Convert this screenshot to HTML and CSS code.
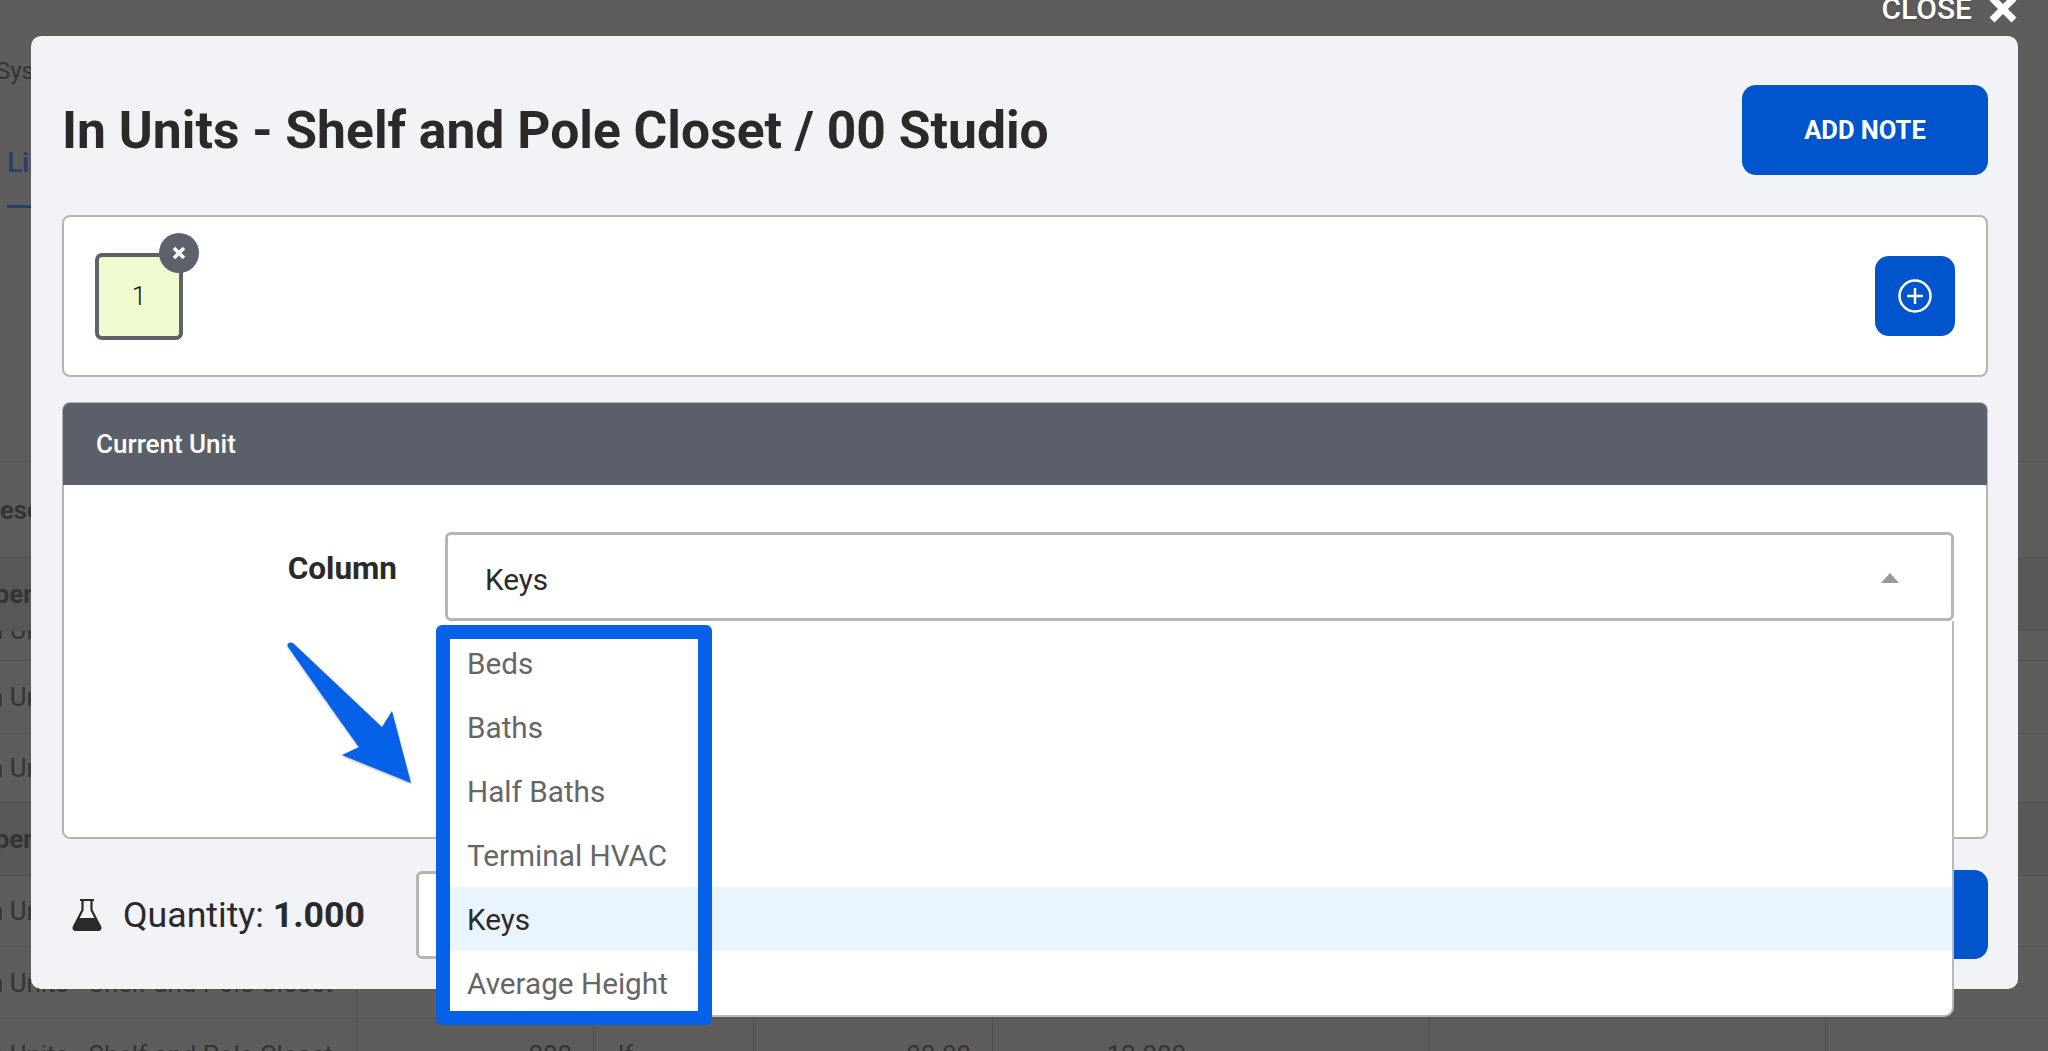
FILE: index.html
```html
<!DOCTYPE html>
<html lang="en">
<head>
<meta charset="utf-8">
<title>In Units</title>
<link rel="stylesheet" href="styles.css">
</head>
<body>
<div class="page">
  <div class="top">
    <div class="sys">Systems</div>
    <div class="tab">List</div>
  </div>
  <div class="row r-head"><div class="cell first strong">Description</div></div>
  <div class="row r-open"><div class="cell first strong open">Open</div></div>
  <div class="row r-clip"><div class="cell first clipped">In Units</div></div>
  <div class="row r-a"><div class="cell first">In Units</div></div>
  <div class="row r-b"><div class="cell first">In Units</div></div>
  <div class="row r-open"><div class="cell first strong open">Open</div></div>
  <div class="row r-c"><div class="cell first">In Units</div></div>
  <div class="row r-d cols">
    <div class="cell first">In Units - Shelf and Pole Closet</div><div class="cell"></div><div class="cell"></div><div class="cell"></div><div class="cell"></div><div class="cell"></div>
  </div>
  <div class="row r-e cols">
    <div class="cell first">In Units - Shelf and Pole Closet</div>
    <div class="cell num">000</div>
    <div class="cell txt">lf</div>
    <div class="cell num">00.00</div>
    <div class="cell num mid">12.000</div>
    <div class="cell"></div>
  </div>
</div>

<div class="modal">
  <div class="close">
    <span>CLOSE</span>
    <svg class="close-x" width="28" height="28" viewBox="0 0 28 28"><path d="M3 3L25 25M25 3L3 25"/></svg>
  </div>
  <header class="head">
    <h1 class="title">In Units - Shelf and Pole Closet / 00 Studio</h1>
    <div class="btn note">ADD NOTE</div>
  </header>
  <section class="chips">
    <div class="chip">1
      <span class="badge"><svg width="16" height="16" viewBox="0 0 16 16"><path d="M3 3L13 13M13 3L3 13"/></svg></span>
    </div>
    <div class="btn plus">
      <svg width="36" height="36" viewBox="0 0 36 36"><circle cx="18" cy="18" r="15.5"/><path d="M18 10V26M10 18H26"/></svg>
    </div>
  </section>
  <section class="unit">
    <div class="unit-head">Current Unit</div>
    <div class="unit-body">
      <div class="label">Column</div>
      <div class="select-wrap">
        <div class="select"><span>Keys</span><i class="caret"></i></div>
        <div class="menu">
          <div class="opt">Beds</div>
          <div class="opt">Baths</div>
          <div class="opt">Half Baths</div>
          <div class="opt">Terminal HVAC</div>
          <div class="opt on">Keys</div>
          <div class="opt">Average Height</div>
          <div class="mark"></div>
        </div>
      </div>
    </div>
    <svg class="arrow" width="130" height="150" viewBox="0 0 130 150"><path d="M2.500 7C2 3.500 6 2.500 8.500 4.500L97 88L107 72L126 144L57 116L74 108C65 95 52 78 2.500 7Z"/></svg>
  </section>
  <footer class="foot">
    <div class="qty">
      <svg class="flask" width="30" height="33" viewBox="0 0 30 33"><path class="fl" d="M8 2H22M10.500 2V12L2 28.500C1 30.500 2 32 4 32H26C28 32 29 30.500 28 28.500L19.500 12V2"/><path class="fi" d="M6.500 20H23.500L28 29C28.800 30.600 28 32 26 32H4C2 32 1.200 30.600 2 29Z"/></svg>
      <span>Quantity: <b>1.000</b></span>
    </div>
    <div class="input"></div>
    <div class="btn save"></div>
  </footer>
</div>
</body>
</html>
```
FILE: styles.css
```css
* { box-sizing: border-box; }
html, body { margin: 0; height: 1051px; overflow: hidden; }
body { position: relative; background: #5e5d5b; font-family: Roboto, "Liberation Sans", sans-serif; color: #2a2a2a; }

.page { color: #343434; font-size: 25.800px; overflow: hidden; height: 1051px; }
.top { height: 462px; padding-top: 57px; border-bottom: 1px solid #525250; }
.sys { margin-left: -4px; line-height: 28px; font-size: 24px; }
.tab { display: inline-block; margin: 64px 0 0 7px; padding-bottom: 28px; line-height: 28px; width: 60px; color: #24406f; font-weight: 500; font-size: 28px; border-bottom: 3px solid #24406f; }

.row { display: flex; align-items: center; border-bottom: 1px solid #525250; overflow: hidden; }
.r-head { height: 96px; }
.r-open { height: 73px; background: #585859; }
.r-clip { height: 30px; align-items: flex-start; }
.r-a { height: 73px; }
.r-b { height: 69px; }
.r-c { height: 71px; }
.r-d { height: 72px; }
.r-e { height: 73px; }
.cols { display: grid; grid-template-columns: 357px 237px 160px 239px 436px 397px 1fr; align-items: stretch; }
.cell { display: flex; align-items: center; border-right: 1px solid #50504e; white-space: nowrap; }
.row:not(.cols) .cell { border-right: 0; }
.first { text-indent: -18px; }
.strong { font-weight: 700; text-indent: -17px; }
.open { text-indent: -23px; }
.clipped { margin-top: -16px; }
.num { justify-content: flex-end; padding-right: 21px; }
.mid { padding-right: 242px; }
.txt { padding-left: 24px; }

.modal { position: absolute; left: 31px; top: 36px; width: 1987px; height: 953px; padding: 49px 30px 30px 31px; background: #f1f3f7; border-radius: 10px; display: flex; flex-direction: column; }
.close { position: absolute; right: 1px; top: -45px; display: flex; align-items: center; gap: 17px; color: #fff; font-size: 30px; font-weight: 500; text-shadow: 0 1px 3px rgba(0,0,0,.25); }
.close-x path { fill: none; stroke: #fff; stroke-width: 7; }

.head { display: flex; justify-content: space-between; align-items: center; height: 90px; }
.title { margin: 0; font-size: 51.600px; font-weight: 700; color: #2a2a2a; white-space: nowrap; }
.btn { background: #0055cc; color: #fff; border-radius: 14px; display: flex; align-items: center; justify-content: center; }
.note { width: 246px; height: 90px; font-size: 25.500px; font-weight: 700; }

.chips { margin-top: 40px; height: 162px; background: #fff; border: 2px solid #b5b5b5; border-radius: 8px; display: flex; align-items: center; justify-content: space-between; padding: 0 31px 0 31px; }
.chip { position: relative; width: 88px; height: 87px; background: #f0fbcf; border: 4px solid #5c616b; border-radius: 7px; display: flex; align-items: center; justify-content: center; font-size: 26px; font-weight: 300; color: #111; }
.badge { position: absolute; right: -20px; top: -24px; width: 40px; height: 40px; border-radius: 50%; background: #5c616b; display: flex; align-items: center; justify-content: center; }
.badge path { fill: none; stroke: #fff; stroke-width: 3.500; }
.plus { width: 80px; height: 80px; }
.plus circle, .plus path { fill: none; stroke: #fff; stroke-width: 2.500; }

.unit { position: relative; margin-top: 25px; height: 437px; background: #fff; border: 2px solid #b5b5b5; border-radius: 8px; }
.unit-head { height: 82px; margin: -1px -1px 0; background: #5a5f69; color: #fff; border-radius: 7px 7px 0 0; display: flex; align-items: center; padding-left: 33px; font-size: 26px; font-weight: 500; }
.unit-body { display: grid; grid-template-columns: 381px 1fr; padding: 47px 32px 0 0; }
.label { text-align: right; padding: 19px 48px 0 0; font-size: 31.500px; font-weight: 700; line-height: 36px; color: #2a2a2a; }
.select-wrap { position: relative; z-index: 3; }
.select { height: 89px; background: #fff; border: 3px solid #b5b5b5; border-radius: 6px; display: flex; align-items: center; justify-content: space-between; padding: 6px 52px 0 37px; font-size: 29.700px; color: #2a2a2a; }
.caret { width: 0; height: 0; margin-top: -4px; border: 9px solid transparent; border-top: 0; border-bottom: 10px solid #999; }
.menu { position: absolute; left: 0; right: 0; top: 100%; height: 396px; padding-top: 10px; background: #fff; border: 2px solid #b9b9b9; border-top: 0; border-left: 0; border-radius: 0 0 10px 10px; font-size: 29.700px; color: #666; }
.opt { height: 64px; display: flex; align-items: center; padding-left: 22px; }
.opt.on { background: #eaf4fe; color: #2a2a2a; }
.mark { position: absolute; left: -9px; top: 4px; width: 276px; height: 400px; border: 14px solid #0561e8; border-radius: 6px; }
.arrow { position: absolute; left: 221px; top: 235px; z-index: 2; overflow: visible; }
.arrow path { fill: #0561e8; filter: drop-shadow(0 1px 1px rgba(0,0,0,.3)); }

.foot { display: flex; align-items: center; margin-top: 31px; height: 89px; }
.qty { width: 354px; display: flex; align-items: center; gap: 21px; padding-left: 10px; font-size: 35.700px; color: #2a2a2a; flex: none; }
.qty b { font-weight: 700; }
.flask { flex: none; }
.fl { fill: none; stroke: #2a2a2a; stroke-width: 2.200; }
.fi { fill: #2a2a2a; }
.input { flex: 1; height: 88px; background: #fff; border: 3px solid #b5b5b5; border-radius: 6px; }
.save { width: 246px; height: 89px; }
```
